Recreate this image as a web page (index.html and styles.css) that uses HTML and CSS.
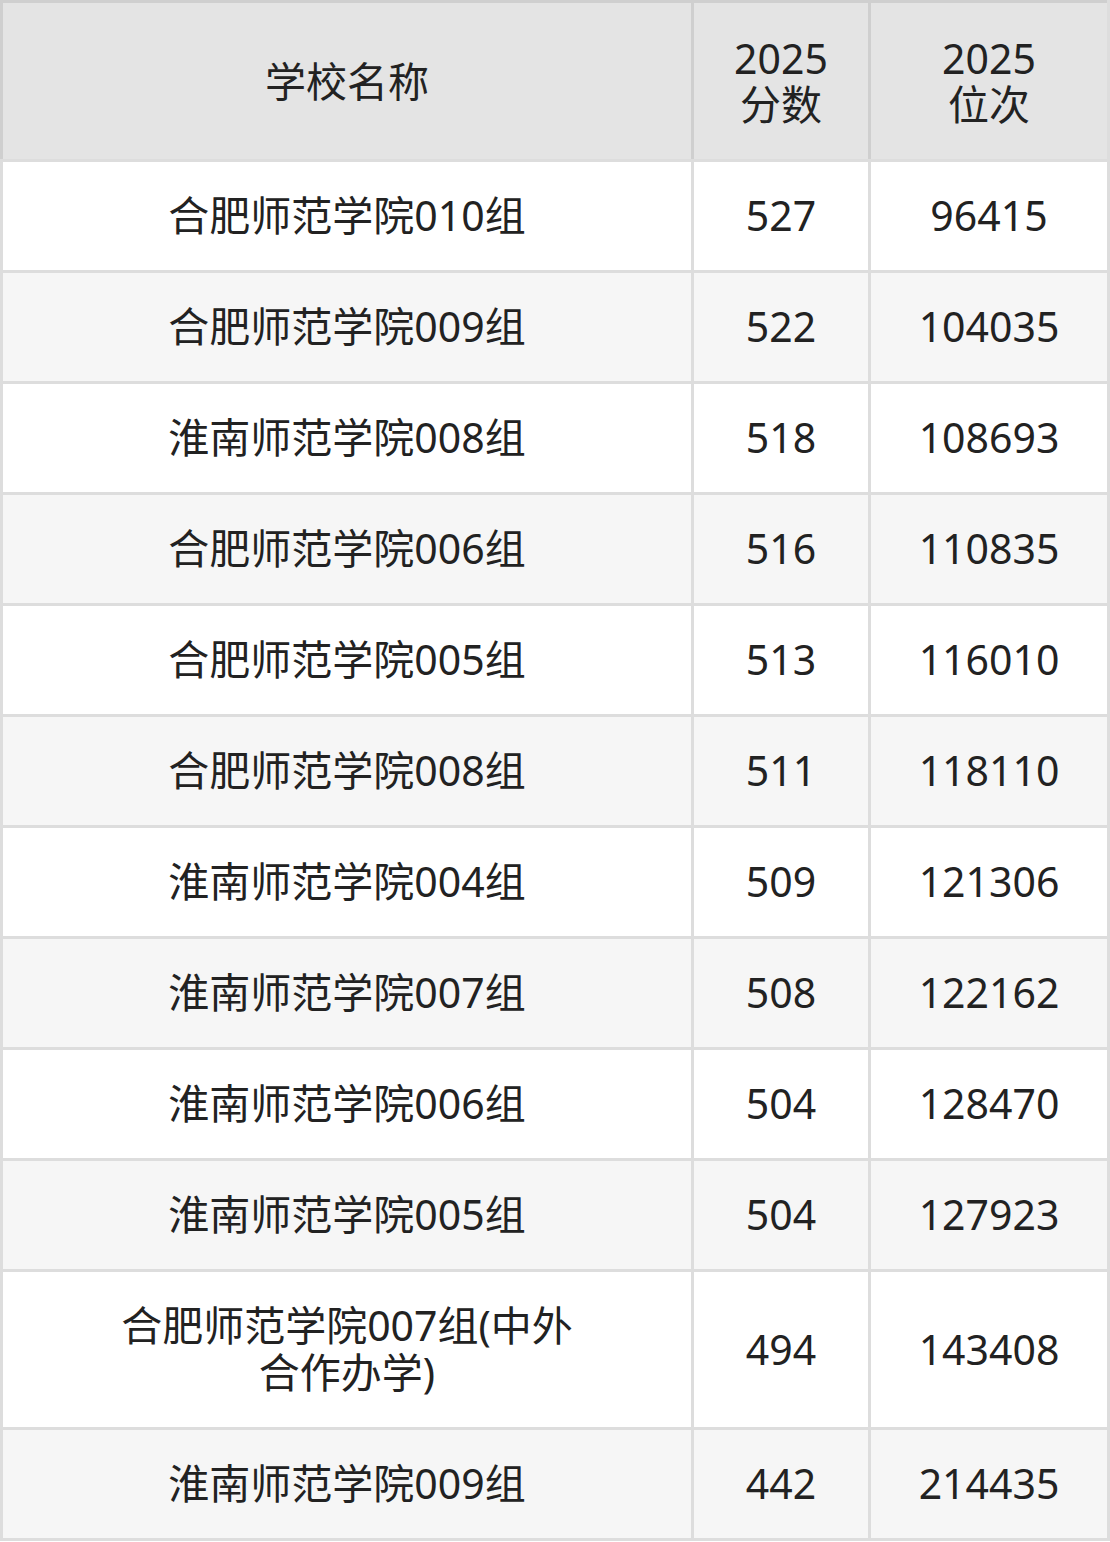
FILE: index.html
```html
<!DOCTYPE html>
<html lang="zh-CN">
<head>
<meta charset="utf-8">
<title>合肥师范学院 淮南师范学院 2025 分数 位次</title>
<link rel="stylesheet" href="styles.css">
</head>
<body>
<table class="score-table">
  <thead>
    <tr>
      <th class="col-name">学校名称</th>
      <th class="col-score">2025<br>分数</th>
      <th class="col-rank">2025<br>位次</th>
    </tr>
  </thead>
  <tbody>
    <tr><td class="col-name">合肥师范学院010组</td><td>527</td><td>96415</td></tr>
    <tr><td class="col-name">合肥师范学院009组</td><td>522</td><td>104035</td></tr>
    <tr><td class="col-name">淮南师范学院008组</td><td>518</td><td>108693</td></tr>
    <tr><td class="col-name">合肥师范学院006组</td><td>516</td><td>110835</td></tr>
    <tr><td class="col-name">合肥师范学院005组</td><td>513</td><td>116010</td></tr>
    <tr><td class="col-name">合肥师范学院008组</td><td>511</td><td>118110</td></tr>
    <tr><td class="col-name">淮南师范学院004组</td><td>509</td><td>121306</td></tr>
    <tr><td class="col-name">淮南师范学院007组</td><td>508</td><td>122162</td></tr>
    <tr><td class="col-name">淮南师范学院006组</td><td>504</td><td>128470</td></tr>
    <tr><td class="col-name">淮南师范学院005组</td><td>504</td><td>127923</td></tr>
    <tr><td class="col-name">合肥师范学院007组(中外合作办学)</td><td>494</td><td>143408</td></tr>
    <tr><td class="col-name">淮南师范学院009组</td><td>442</td><td>214435</td></tr>
  </tbody>
</table>
</body>
</html>
```

FILE: styles.css
```css
html, body {
  margin: 0;
  padding: 0;
  background: #ffffff;
}

.score-table {
  width: 1110px;
  table-layout: fixed;
  border-collapse: separate;
  border-spacing: 0;
  border-right: 3px solid #dddddd;
  border-bottom: 3px solid #dddddd;
  font-family: "Noto Sans", "Noto Sans CJK SC", sans-serif;
  font-size: 41px;
  line-height: 47px;
  color: #222222;
}

.score-table th,
.score-table td {
  box-sizing: border-box;
  text-align: center;
  vertical-align: middle;
  font-weight: normal;
  border-left: 3px solid #dddddd;
  border-top: 3px solid #dddddd;
  padding: 30px 10px 31px;
}

.score-table th {
  background: #e4e4e4;
  border-color: #cfcfcf;
  line-height: 46px;
  padding: 32px 10px 32px;
}

.score-table .col-name {
  width: 691px;
  padding-left: 110px;
  padding-right: 110px;
}

.score-table .col-score {
  width: 177px;
}

.score-table .col-rank {
  width: 239px;
}

.score-table tbody tr:nth-child(even) td {
  background: #f6f6f6;
}

.score-table tbody tr:nth-child(odd) td {
  background: #ffffff;
}
```
